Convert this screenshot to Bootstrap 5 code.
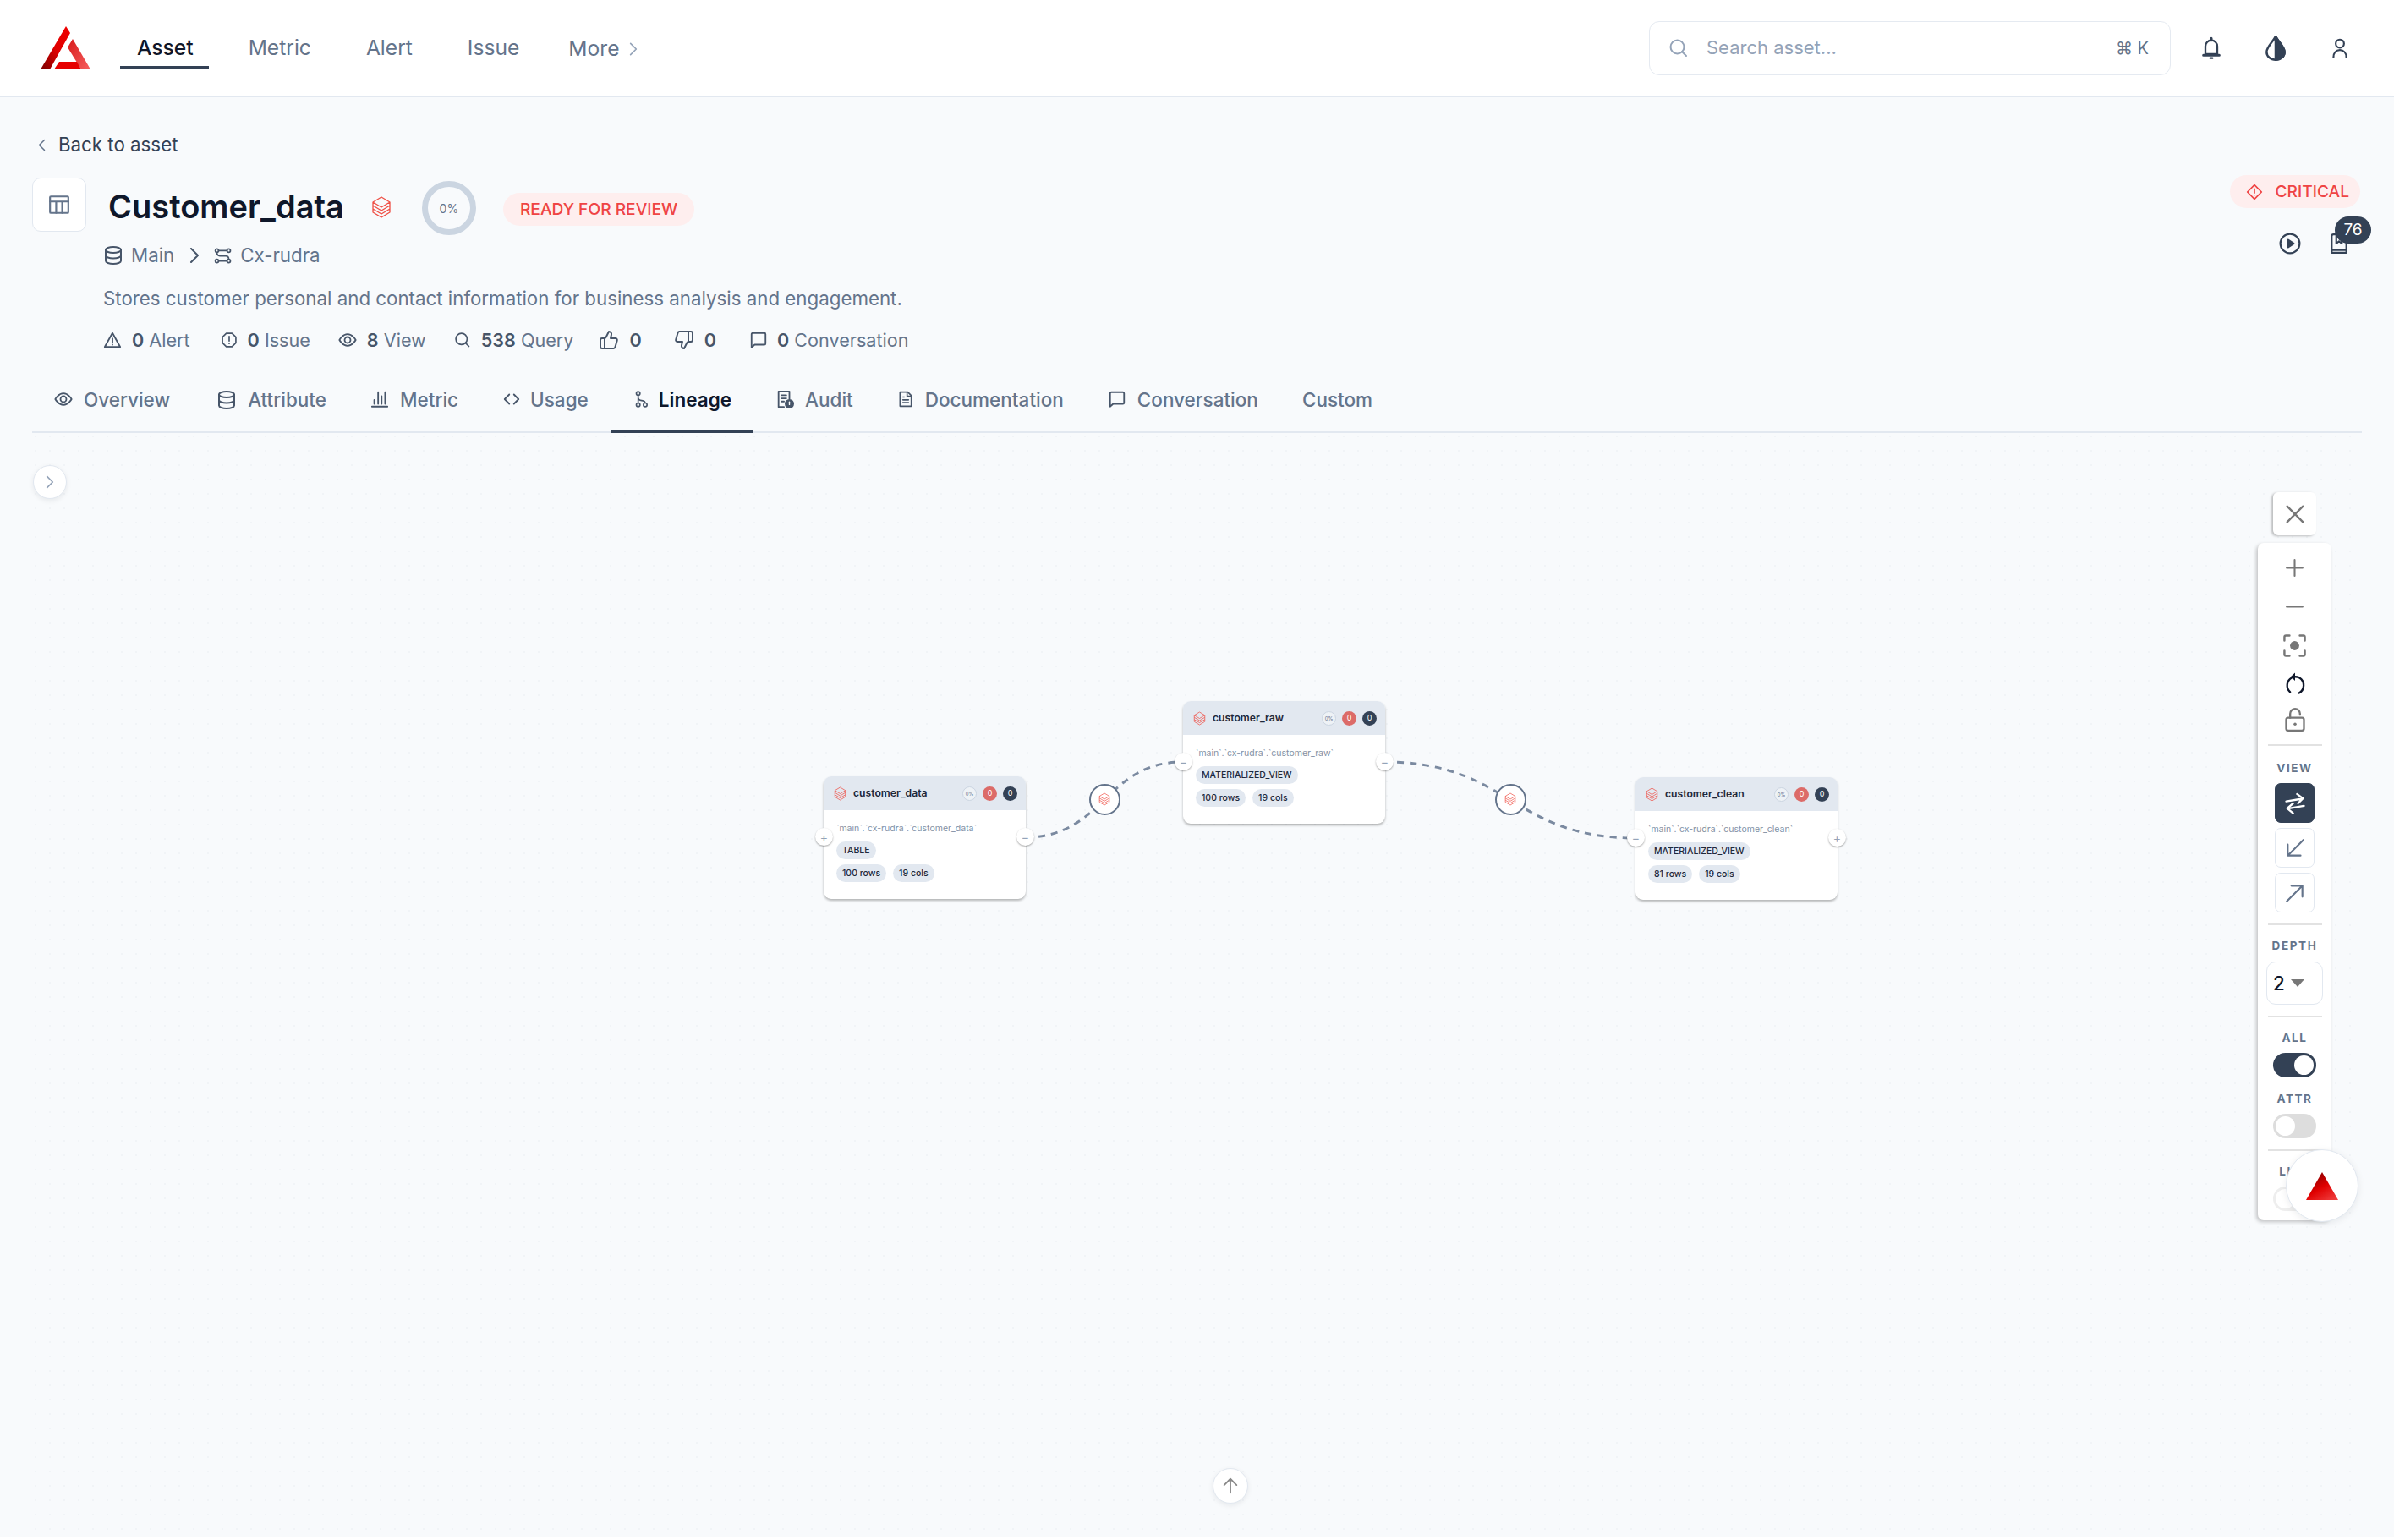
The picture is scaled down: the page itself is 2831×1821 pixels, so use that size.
<!DOCTYPE html>
<html lang="en">
<head>
    <meta charset="UTF-8">
    <meta name="viewport" content="width=device-width, initial-scale=1.0">
    <title>Customer_data - Lineage</title>
    <link href="https://cdn.jsdelivr.net/npm/bootstrap@5.3.0/dist/css/bootstrap.min.css" rel="stylesheet">
    <style>
        html { background: #fff; }
        body { width: 2831px; height: 1818px; overflow: hidden; background: #f8fafc; font-family: Inter, "Liberation Sans", sans-serif; color: #0f172a; font-size: 22.3px; }
        .ico { fill: none; stroke: currentColor; stroke-width: 2; stroke-linecap: round; stroke-linejoin: round; flex: none; }
        .dbx { fill: none; stroke: #ef4f45; stroke-width: 1.2; stroke-linejoin: round; flex: none; }

        /* top bar */
        .app-header { height: 115px; background: #fff; border-bottom: 2px solid #e2e8f0; padding: 0 43px 0 48px; }
        .main-nav { margin-left: 34px; gap: 25px; }
        .main-nav .nav-link { height: 50px; padding: 3px 20px 0; display: flex; align-items: center; color: #64748b; font-size: 24.6px; border-bottom: 4px solid transparent; }
        .main-nav .nav-link.active { margin-right: 2px; padding-right: 18px; color: #0f172a; font-weight: 500; border-bottom-color: #334155; }
        .main-nav .more { margin-left: -7px; padding-top: 6px; gap: 12px; }
        .main-nav .more svg { color: #94a3b8; }
        .search-box { width: 617px; height: 64px; margin-right: 27px; padding: 0 25px 0 22px; gap: 21px; border: 1.5px solid #e5eaf1; border-radius: 12px; color: #94a3b8; font-size: 22px; }
        .search-box kbd { background: none; padding: 0; box-shadow: none; color: #64748b; font-family: Inter, sans-serif; font-size: 20px; margin-left: auto; }
        .head-btn { width: 42px; height: 42px; padding: 0; border: 0; background: none; color: #334155; }
        .head-actions { gap: 34px; margin-top: -3px; }

        /* asset header */
        .page-head { padding: 0 38px; }
        .back-link { margin-top: 42px; height: 28px; padding-left: 7px; gap: 15px; color: #334155; }
        .back-link svg { color: #64748b; }
        .title-row { margin-top: 25px; height: 68px; }
        .type-box { width: 64px; height: 64px; margin-right: 26px; align-self: flex-start; color: #64748b; background: #fff; border: 1.5px solid #e2e8f0; border-radius: 10px; }
        .asset-title { margin: 0 32px 0 0; font-size: 38px; font-weight: 600; line-height: 1; color: #0f172a; }
        .title-dbx { margin-top: 2px; stroke-width: 1.300; }
        .score-ring { width: 64px; height: 64px; margin: 4px 32px 0 36px; border: 7px solid #cbd5e1; border-radius: 50%; font-size: 14px; color: #64748b; }
        .status-pill { height: 39px; margin-top: 6px; padding: 0 20px; background: #feeeee; color: #ef4444; border-radius: 20px; font-size: 19.2px; font-weight: 500; }
        .detail-block { margin-left: 84px; color: #64748b; }
        .crumbs { margin-top: 10px; height: 28px; }
        .crumbs svg { color: #475569; }
        .crumb-db { margin-right: 9px; }
        .crumb-sep { margin: 0 17px 0 18px; }
        .crumb-schema { margin-right: 10px; }
        .asset-desc { margin: 23px 0 0; line-height: 28px; }
        .stats { margin-top: 21px; height: 28px; font-size: 21.6px; color: #475569; }
        .stats svg { color: #475569; }
        .stats b { font-weight: 600; }
        .stat { gap: 12px; }
        .stat + .stat { margin-left: 33px; }
        .stat + .stat-issue { margin-left: 36px; }
        .stat + .stat-like { margin-left: 30px; }
        .stat + .stat-thumb { margin-left: 38px; }
        .stat + .stat-far { margin-left: 39px; gap: 11px; }
        .stat-label { color: #64748b; }
        .side-head { padding-top: 92px; }
        .critical-pill { height: 39px; margin-right: 2px; padding: 0 13px 0 19px; gap: 14px; background: #feeeee; color: #ef4444; border-radius: 20px; font-size: 19.2px; font-weight: 500; }
        .side-actions { margin: 29px 14px 0 0; gap: 32px; color: #334155; }
        .count-badge { left: 8px; top: -19px; width: 43px; height: 32px; background: #334155; color: #fff; border-radius: 16px; font-size: 19px; }

        /* tabs */
        .asset-tabs { margin: 18px 38px 0; border-bottom: 2px solid #e2e8f0; }
        .asset-tabs .nav-link { height: 78px; margin-bottom: -2px; padding: 25px 26px 0; gap: 13px; display: flex; align-items: flex-start; color: #64748b; font-size: 22.5px; font-weight: 500; line-height: 28px; border-bottom: 4px solid transparent; }
        .asset-tabs .nav-link.active { gap: 11px; color: #0f172a; font-weight: 600; border-bottom-color: #334155; }
        .asset-tabs .nav-link svg { color: #475569; margin-top: 2px; }
        .asset-tabs .tab-db { margin-left: 3px; }
        .asset-tabs .tab-code { gap: 11px; }

        /* lineage canvas */
        .canvas { height: 1304px; margin: 2px 38px 0; background-image: radial-gradient(circle, #dde1e6 .6px, transparent .9px); background-size: 17px 17px; background-position: -4.5px -6.5px; }
        .edges { left: 0; top: 0; width: 2755px; height: 1304px; }
        .round-btn { width: 40px; height: 40px; padding: 0; background: #fff; border: 1px solid #e2e8f0; border-radius: 50%; box-shadow: 0 2px 6px rgba(15, 23, 42, .08); }
        .expand-btn { left: 1px; top: 36px; color: #94a3b8; }
        .up-btn { left: 1396px; top: 1222px; width: 42px; height: 42px; color: #888; }

        .node { width: 239px; height: 145px; background: #fff; border-radius: 9px; box-shadow: 0 2px 3px rgba(0, 0, 0, .28); }
        .node-data { left: 936px; top: 404px; }
        .node-raw { left: 1361px; top: 315px; }
        .node-clean { left: 1896px; top: 405px; }
        .node-head { height: 40px; padding: 0 10px 0 12px; background: #e2e8f0; border-radius: 9px 9px 0 0; }
        .node-name { margin-left: 8px; margin-right: auto; font-size: 12.2px; font-weight: 600; color: #1e293b; }
        .node-head .dot { width: 17px; height: 17px; margin-left: 7px; border-radius: 50%; color: #fff; font-size: 9px; }
        .dot-score { background: #eef2f6; border: 1px solid #cbd5e1; color: #64748b !important; font-size: 6px !important; }
        .dot-red { background: #dc6b68; }
        .dot-dark { background: #334155; }
        .node-body { padding: 15px 15px 0; }
        .node-path { height: 14px; font-size: 10.5px; line-height: 14px; color: #8492a6; white-space: nowrap; }
        .node-tags { margin-top: 8px; }
        .node-tags + .node-tags { margin-top: 6px; gap: 8px; }
        .tag { height: 21px; padding: 0 7px; background: #e2e8f0; border-radius: 11px; font-size: 10.5px; font-weight: 500; line-height: 21px; color: #1e293b; }
        .handle { width: 21px; height: 21px; top: 61px; background: #fff; border-radius: 50%; box-shadow: 0 1px 2px rgba(0, 0, 0, .35); color: #94a3b8; font-size: 14px; line-height: 1; }
        .handle-l { left: -10px; }
        .handle-r { right: -10px; }
        .mid-node { width: 37px; height: 37px; top: 412.5px; background: #fff; border: 2.5px solid #64748b; border-radius: 50%; }
        .mid-a { left: 1249.5px; }
        .mid-b { left: 1729.5px; }

        /* tool panel */
        .tool-close { left: 2650px; top: 68px; width: 51px; height: 51px; padding: 0; background: #fff; border: 0; border-radius: 6px; box-shadow: -2px 1px 3px rgba(0, 0, 0, .25); color: #777; }
        .tool-panel { left: 2632px; top: 128px; width: 87px; height: 801px; padding-top: 6px; background: #fff; border-radius: 7px; box-shadow: -2px 2px 4px rgba(0, 0, 0, .22); }
        .tool-icon { width: 100%; height: 46px; padding: 0; border: 0; background: none; color: #777; }
        .tool-icon.reset { color: #0f172a; }
        .tool-icon.lock { height: 38px; }
        .tool-sep { width: 64px; height: 2px; margin: 10px 0 17px; background: #e2e2e2; flex: none; }
        .tool-sep.wide { margin: 13px 0 15px; }
        .tool-label { height: 18px; font-size: 13.5px; font-weight: 700; line-height: 18px; letter-spacing: 1.6px; color: #64748b; }
        .view-btn { width: 47px; height: 47px; margin-top: 6px; padding: 0; background: #fff; border: 1px solid #e2e8f0; border-radius: 7px; color: #64748b; }
        .view-btn.on { margin-top: 9px; background: #334155; border-color: #334155; color: #fff; }
        .depth-select { width: 67px; height: 51px; margin-top: 10px; padding-left: 7px; gap: 7px; border: 1px solid #e2e8f0; border-radius: 11px; font-weight: 500; }
        .depth-caret { width: 0; height: 0; border-left: 8px solid transparent; border-right: 8px solid transparent; border-top: 9px solid #777; }
        .toggle { width: 51px; height: 29px; margin-top: 9px; padding: 3px; background: #ddd; border-radius: 15px; flex: none; }
        .toggle i { display: block; width: 23px; height: 23px; background: #fff; border-radius: 50%; }
        .toggle.on { background: #334155; justify-content: flex-end; }
        .toggle.faint { background: #eee; margin-top: 9px; }
        .fab { left: 2665px; top: 845px; width: 86px; height: 86px; padding: 0; background: #fff; border: 1px solid #e2e8f0; border-radius: 50%; box-shadow: 0 2px 8px rgba(15, 23, 42, .08); }
    </style>
</head>
<body>
    <svg class="d-none" xmlns="http://www.w3.org/2000/svg">
        <symbol id="i-search" viewBox="0 0 24 24"><circle cx="10.5" cy="10.5" r="8"/><path d="M21 21l-5-5"/></symbol>
        <symbol id="i-bell" viewBox="0 0 24 24"><path d="M6 18V10a6 6 0 0 1 12 0v8z"/><path d="M12 4V2M4 19h16" stroke-width="2.600"/><path d="M11 22h2"/></symbol>
        <symbol id="i-contrast" viewBox="0 0 24 24"><path d="M12 1C8.500 7 3.500 11 3.500 15.500a8.500 7.500 0 0 0 17 0C20.500 11 15.500 7 12 1z"/><path d="M12 1c3.500 6 8.500 10 8.500 14.500a8.500 7.500 0 0 1-8.500 7.500z" fill="currentColor"/></symbol>
        <symbol id="i-user" viewBox="0 0 24 24"><circle cx="12" cy="7" r="4.500"/><path d="M5 22c0-5 3-8 7-8s7 3 7 8"/></symbol>
        <symbol id="i-table" viewBox="0 0 24 24"><rect x="2" y="3" width="20" height="18" rx="1"/><path d="M2 8.500h20M8.700 8.500V21M15.300 8.500V21"/></symbol>
        <symbol id="i-db" viewBox="0 0 24 24"><ellipse cx="12" cy="5.500" rx="9" ry="3.500"/><path d="M3 5.500v13c0 1.900 4 3.500 9 3.500s9-1.600 9-3.500v-13"/><path d="M3 12c0 1.900 4 3.500 9 3.500s9-1.600 9-3.500"/></symbol>
        <symbol id="i-schema" viewBox="0 0 24 24"><circle cx="4" cy="5" r="2.200"/><circle cx="20" cy="5" r="2.200"/><circle cx="4" cy="19" r="2.200"/><circle cx="20" cy="19" r="2.200"/><path d="M6.500 5h11M6.500 19h11M4 7.500c0 3 1.500 4.500 4 4.500h8c2.500 0 4 1.500 4 4.500"/></symbol>
        <symbol id="i-alert" viewBox="0 0 24 24"><path d="M12 3l10 18H2z"/><path d="M12 10v5M12 18v.01"/></symbol>
        <symbol id="i-issue" viewBox="0 0 24 24"><path d="M8 2.500h8l5.500 5.500v8L16 21.500H8L2.500 16V8z"/><path d="M12 7v6.500M12 17v.01"/></symbol>
        <symbol id="i-eye" viewBox="0 0 24 24"><path d="M1.500 12S5.500 4.500 12 4.500 22.500 12 22.500 12 18.500 19.500 12 19.500 1.500 12 1.500 12z"/><circle cx="12" cy="12" r="3.800"/></symbol>
        <symbol id="i-up" viewBox="0 0 24 24"><path d="M7 10v12M15 5.880 14 10h5.830a2 2 0 0 1 1.920 2.560l-2.330 8A2 2 0 0 1 17.500 22H4a2 2 0 0 1-2-2v-8a2 2 0 0 1 2-2h2.760a2 2 0 0 0 1.790-1.110L12 2a3.130 3.130 0 0 1 3 3.880Z"/></symbol>
        <symbol id="i-down" viewBox="0 0 24 24"><path d="M17 14V2M9 18.120 10 14H4.170a2 2 0 0 1-1.920-2.560l2.330-8A2 2 0 0 1 6.500 2H20a2 2 0 0 1 2 2v8a2 2 0 0 1-2 2h-2.760a2 2 0 0 0-1.790 1.110L12 22a3.130 3.130 0 0 1-3-3.880Z"/></symbol>
        <symbol id="i-chat" viewBox="0 0 24 24"><path d="M3 4.500A1.500 1.500 0 0 1 4.500 3h15A1.500 1.500 0 0 1 21 4.500v12a1.500 1.500 0 0 1-1.500 1.500H7l-4 3.500z"/></symbol>
        <symbol id="i-bars" viewBox="0 0 24 24"><path d="M2 21.500h20M5 18v-5M10 18V3M14.500 18V8M19 18V3"/></symbol>
        <symbol id="i-code" viewBox="0 0 24 24"><path d="M9 6l-6 6 6 6M15 6l6 6-6 6"/></symbol>
        <symbol id="i-lineage" viewBox="0 0 24 24"><circle cx="8" cy="4" r="2.600"/><circle cx="8" cy="20" r="2.600"/><circle cx="18" cy="20" r="2.600"/><path d="M8 6.600v10.800M8 9.500c0 3.500 2 4 5 4.500 3 .5 5 1 5 3.400"/></symbol>
        <symbol id="i-audit" viewBox="0 0 24 24"><path d="M11 22H4V2h14v10"/><path d="M8 7h6M8 11h6M8 15h3"/><circle cx="18" cy="18" r="5" fill="currentColor"/><path d="M18 15.500V19" stroke="#f8fafc" stroke-width="1.500"/></symbol>
        <symbol id="i-doc" viewBox="0 0 24 24"><path d="M4 2h11l5 5v15H4z"/><path d="M14 2v6h6M8 9h2M8 13h8M8 17h8"/></symbol>
        <symbol id="i-diamond" viewBox="0 0 24 24"><path d="M12 2l10 10-10 10L2 12z"/><path d="M12 7.500v6M12 16.500v.01"/></symbol>
        <symbol id="i-play" viewBox="0 0 24 24"><circle cx="12" cy="12" r="10.500"/><path d="M10 8l6 4-6 4z" fill="currentColor"/></symbol>
        <symbol id="i-book" viewBox="0 0 24 24"><path d="M4 22V4a2 2 0 0 1 2-2h12a2 2 0 0 1 2 2v18z"/><path d="M9 3v9l3-2.500 3 2.500V3"/><path d="M4 19h16"/></symbol>
        <symbol id="i-close" viewBox="0 0 24 24"><path d="M4 4l16 16M20 4L4 20"/></symbol>
        <symbol id="i-plus" viewBox="0 0 24 24"><path d="M12 3v18M3 12h18"/></symbol>
        <symbol id="i-minus" viewBox="0 0 24 24"><path d="M3 12h18"/></symbol>
        <symbol id="i-focus" viewBox="0 0 24 24"><path d="M2 7V3.500A1.500 1.500 0 0 1 3.500 2H7M17 2h3.500A1.500 1.500 0 0 1 22 3.500V7M22 17v3.500a1.500 1.500 0 0 1-1.500 1.500H17M7 22H3.500A1.500 1.500 0 0 1 2 20.500V17"/><circle cx="12" cy="12" r="4.500" fill="currentColor" stroke="none"/></symbol>
        <symbol id="i-reset" viewBox="0 0 24 24"><path d="M8.500 5.500A9 9 0 0 0 7 20M16 21a9 9 0 0 0 .5-15.500C15 4.800 14 4.500 12 4.500"/><path d="M12 .5v8L7.500 4.500z" fill="currentColor" stroke="none"/></symbol>
        <symbol id="i-lock" viewBox="0 0 24 24"><rect x="3" y="10" width="18" height="13" rx="2"/><path d="M7 10V6a5 5 0 0 1 10 0v1"/><circle cx="12" cy="16.500" r="1.500" fill="currentColor" stroke="none"/></symbol>
        <symbol id="i-swap" viewBox="0 0 24 24"><path d="M3 10l15-2.500M14 2.500l6 4.500-5 5"/><path d="M21 14.500L6 17M10 12l-6 5 6 5"/></symbol>
        <symbol id="i-in" viewBox="0 0 24 24"><path d="M21 3L4 20M4 8v12h14"/></symbol>
        <symbol id="i-out" viewBox="0 0 24 24"><path d="M3 21L20 4M8 4h12v12"/></symbol>
        <symbol id="i-arrow-up" viewBox="0 0 24 24"><path d="M12 21V3M4 11l8-8 8 8"/></symbol>
        <symbol id="i-dbx" viewBox="0 0 24 26"><path d="M12 1l10 6-10 6L2 7zM2 7v4l10 6 10-6V7M2 11v4l10 6 10-6v-4M2 15v4l10 6 10-6v-4"/></symbol>
    </svg>

    <nav class="app-header d-flex align-items-center">
        <svg width="60" height="52" viewBox="48 27 60 52" xmlns="http://www.w3.org/2000/svg" aria-label="Logo">
            <defs>
                <linearGradient id="logoA" x1="0" y1="1" x2="1" y2="0"><stop offset="0" stop-color="#7a0000"/><stop offset=".5" stop-color="#e00000"/><stop offset="1" stop-color="#f00000"/></linearGradient>
                <linearGradient id="logoB" x1="0" y1="0" x2="1" y2="1"><stop offset="0" stop-color="#d81a1a"/><stop offset="1" stop-color="#f66060"/></linearGradient>
            </defs>
            <polygon points="78,27 83,35 59,78 48,78" fill="url(#logoA)"/>
            <polygon points="86,42 107,78 96,78 80,52" fill="url(#logoB)"/>
            <polygon points="70,69 91,69 96,78 64,78" fill="#e60000"/>
        </svg>
        <div class="nav main-nav">
            <a class="nav-link active" href="#">Asset</a>
            <a class="nav-link" href="#">Metric</a>
            <a class="nav-link" href="#">Alert</a>
            <a class="nav-link" href="#">Issue</a>
            <a class="nav-link more" href="#">More <svg class="ico" width="10" height="16" viewBox="7 3 12 18"><path d="M9 4l8 8-8 8"/></svg></a>
        </div>
        <div class="ms-auto d-flex align-items-center">
            <div class="search-box d-flex align-items-center">
                <svg class="ico" width="24" height="24"><use href="#i-search"/></svg>
                <span>Search asset...</span>
                <kbd>⌘ K</kbd>
            </div>
            <div class="head-actions d-flex">
                <button class="head-btn" type="button"><svg class="ico" width="28" height="28"><use href="#i-bell"/></svg></button>
                <button class="head-btn" type="button"><svg class="ico" width="30" height="30"><use href="#i-contrast"/></svg></button>
                <button class="head-btn" type="button"><svg class="ico" width="26" height="26"><use href="#i-user"/></svg></button>
            </div>
        </div>
    </nav>

    <header class="page-head d-flex">
        <div>
            <div class="back-link d-flex align-items-center">
                <svg class="ico" width="9" height="15" viewBox="5 3 12 18"><path d="M15 4l-8 8 8 8"/></svg>
                <span>Back to asset</span>
            </div>
            <div class="title-row d-flex align-items-center">
                <div class="type-box d-flex align-items-center justify-content-center">
                    <svg class="ico" width="26" height="26"><use href="#i-table"/></svg>
                </div>
                <h1 class="asset-title">Customer_data</h1>
                <svg class="dbx title-dbx" width="24" height="26"><use href="#i-dbx"/></svg>
                <div class="score-ring d-flex align-items-center justify-content-center">0%</div>
                <span class="status-pill d-flex align-items-center">READY FOR REVIEW</span>
            </div>
            <div class="detail-block">
                <div class="crumbs d-flex align-items-center">
                    <svg class="ico crumb-db" width="24" height="24"><use href="#i-db"/></svg>
                    <span>Main</span>
                    <svg class="ico crumb-sep" width="12" height="18" viewBox="7 3 12 18"><path d="M9 4l8 8-8 8"/></svg>
                    <svg class="ico crumb-schema" width="21" height="21"><use href="#i-schema"/></svg>
                    <span>Cx-rudra</span>
                </div>
                <p class="asset-desc">Stores customer personal and contact information for business analysis and engagement.</p>
                <div class="stats d-flex align-items-center">
                    <div class="stat d-flex align-items-center"><svg class="ico" width="22" height="22"><use href="#i-alert"/></svg><span><b>0</b> <span class="stat-label">Alert</span></span></div>
                    <div class="stat stat-issue d-flex align-items-center"><svg class="ico" width="20" height="20"><use href="#i-issue"/></svg><span><b>0</b> <span class="stat-label">Issue</span></span></div>
                    <div class="stat d-flex align-items-center"><svg class="ico" width="22" height="22"><use href="#i-eye"/></svg><span><b>8</b> <span class="stat-label">View</span></span></div>
                    <div class="stat d-flex align-items-center"><svg class="ico" width="20" height="20"><use href="#i-search"/></svg><span><b>538</b> <span class="stat-label">Query</span></span></div>
                    <div class="stat stat-like d-flex align-items-center"><svg class="ico" width="24" height="24"><use href="#i-up"/></svg><b>0</b></div>
                    <div class="stat stat-thumb d-flex align-items-center"><svg class="ico" width="24" height="24"><use href="#i-down"/></svg><b>0</b></div>
                    <div class="stat stat-far d-flex align-items-center"><svg class="ico" width="22" height="22"><use href="#i-chat"/></svg><span><b>0</b> <span class="stat-label">Conversation</span></span></div>
                </div>
            </div>
        </div>
        <div class="side-head ms-auto d-flex flex-column align-items-end">
            <span class="critical-pill d-flex align-items-center"><svg class="ico" width="20" height="20"><use href="#i-diamond"/></svg>CRITICAL</span>
            <div class="side-actions d-flex">
                <svg class="ico" width="26" height="26"><use href="#i-play"/></svg>
                <div class="position-relative">
                    <svg class="ico d-block" width="26" height="26"><use href="#i-book"/></svg>
                    <span class="count-badge position-absolute d-flex align-items-center justify-content-center">76</span>
                </div>
            </div>
        </div>
    </header>

    <div class="nav asset-tabs">
        <a class="nav-link" href="#"><svg class="ico" width="22" height="22"><use href="#i-eye"/></svg>Overview</a>
        <a class="nav-link tab-db" href="#"><svg class="ico" width="24" height="24"><use href="#i-db"/></svg>Attribute</a>
        <a class="nav-link" href="#"><svg class="ico" width="22" height="22"><use href="#i-bars"/></svg>Metric</a>
        <a class="nav-link tab-code" href="#"><svg class="ico" width="22" height="22"><use href="#i-code"/></svg>Usage</a>
        <a class="nav-link active" href="#"><svg class="ico" width="20" height="22"><use href="#i-lineage"/></svg>Lineage</a>
        <a class="nav-link" href="#"><svg class="ico" width="22" height="22"><use href="#i-audit"/></svg>Audit</a>
        <a class="nav-link" href="#"><svg class="ico" width="20" height="22"><use href="#i-doc"/></svg>Documentation</a>
        <a class="nav-link" href="#"><svg class="ico" width="22" height="22"><use href="#i-chat"/></svg>Conversation</a>
        <a class="nav-link" href="#">Custom</a>
    </div>

    <main class="canvas position-relative">
        <svg class="edges position-absolute" viewBox="38 514 2755 1304" xmlns="http://www.w3.org/2000/svg">
            <g fill="none" stroke="#7b8aa0" stroke-width="3" stroke-dasharray="8 7">
                <path d="M1213 990C1306 990 1306 901 1399 901"/>
                <path d="M1637 901C1786 901 1786 991 1935 991"/>
            </g>
        </svg>

        <button class="round-btn expand-btn position-absolute d-flex align-items-center justify-content-center" type="button"><svg class="ico" width="10" height="16" viewBox="7 3 12 18"><path d="M9 4l8 8-8 8"/></svg></button>

        <div class="node node-data position-absolute">
            <div class="node-head d-flex align-items-center">
                <svg class="dbx" width="15" height="17"><use href="#i-dbx"/></svg>
                <span class="node-name">customer_data</span>
                <span class="dot dot-score d-flex align-items-center justify-content-center">0%</span>
                <span class="dot dot-red d-flex align-items-center justify-content-center">0</span>
                <span class="dot dot-dark d-flex align-items-center justify-content-center">0</span>
            </div>
            <div class="node-body">
                <div class="node-path">`main`.`cx-rudra`.`customer_data`</div>
                <div class="node-tags d-flex"><span class="tag">TABLE</span></div>
                <div class="node-tags d-flex"><span class="tag">100 rows</span><span class="tag">19 cols</span></div>
            </div>
            <span class="handle handle-l position-absolute d-flex align-items-center justify-content-center">+</span>
            <span class="handle handle-r position-absolute d-flex align-items-center justify-content-center">−</span>
        </div>

        <div class="node node-raw position-absolute">
            <div class="node-head d-flex align-items-center">
                <svg class="dbx" width="15" height="17"><use href="#i-dbx"/></svg>
                <span class="node-name">customer_raw</span>
                <span class="dot dot-score d-flex align-items-center justify-content-center">0%</span>
                <span class="dot dot-red d-flex align-items-center justify-content-center">0</span>
                <span class="dot dot-dark d-flex align-items-center justify-content-center">0</span>
            </div>
            <div class="node-body">
                <div class="node-path">`main`.`cx-rudra`.`customer_raw`</div>
                <div class="node-tags d-flex"><span class="tag">MATERIALIZED_VIEW</span></div>
                <div class="node-tags d-flex"><span class="tag">100 rows</span><span class="tag">19 cols</span></div>
            </div>
            <span class="handle handle-l position-absolute d-flex align-items-center justify-content-center">−</span>
            <span class="handle handle-r position-absolute d-flex align-items-center justify-content-center">−</span>
        </div>

        <div class="node node-clean position-absolute">
            <div class="node-head d-flex align-items-center">
                <svg class="dbx" width="15" height="17"><use href="#i-dbx"/></svg>
                <span class="node-name">customer_clean</span>
                <span class="dot dot-score d-flex align-items-center justify-content-center">0%</span>
                <span class="dot dot-red d-flex align-items-center justify-content-center">0</span>
                <span class="dot dot-dark d-flex align-items-center justify-content-center">0</span>
            </div>
            <div class="node-body">
                <div class="node-path">`main`.`cx-rudra`.`customer_clean`</div>
                <div class="node-tags d-flex"><span class="tag">MATERIALIZED_VIEW</span></div>
                <div class="node-tags d-flex"><span class="tag">81 rows</span><span class="tag">19 cols</span></div>
            </div>
            <span class="handle handle-l position-absolute d-flex align-items-center justify-content-center">−</span>
            <span class="handle handle-r position-absolute d-flex align-items-center justify-content-center">+</span>
        </div>

        <div class="mid-node mid-a position-absolute d-flex align-items-center justify-content-center"><svg class="dbx" width="14" height="16"><use href="#i-dbx"/></svg></div>
        <div class="mid-node mid-b position-absolute d-flex align-items-center justify-content-center"><svg class="dbx" width="14" height="16"><use href="#i-dbx"/></svg></div>

        <button class="tool-close position-absolute d-flex align-items-center justify-content-center" type="button"><svg class="ico" width="28" height="28"><use href="#i-close"/></svg></button>

        <aside class="tool-panel position-absolute d-flex flex-column align-items-center">
            <button class="tool-icon d-flex align-items-center justify-content-center" type="button"><svg class="ico" width="25" height="25"><use href="#i-plus"/></svg></button>
            <button class="tool-icon d-flex align-items-center justify-content-center" type="button"><svg class="ico" width="25" height="25"><use href="#i-minus"/></svg></button>
            <button class="tool-icon d-flex align-items-center justify-content-center" type="button"><svg class="ico" width="29" height="29"><use href="#i-focus"/></svg></button>
            <button class="tool-icon reset d-flex align-items-center justify-content-center" type="button"><svg class="ico" width="28" height="28"><use href="#i-reset"/></svg></button>
            <button class="tool-icon lock d-flex align-items-center justify-content-center" type="button"><svg class="ico" width="28" height="28"><use href="#i-lock"/></svg></button>
            <div class="tool-sep"></div>
            <div class="tool-label">VIEW</div>
            <button class="view-btn on d-flex align-items-center justify-content-center" type="button"><svg class="ico" width="28" height="28"><use href="#i-swap"/></svg></button>
            <button class="view-btn d-flex align-items-center justify-content-center" type="button"><svg class="ico" width="26" height="26"><use href="#i-in"/></svg></button>
            <button class="view-btn d-flex align-items-center justify-content-center" type="button"><svg class="ico" width="26" height="26"><use href="#i-out"/></svg></button>
            <div class="tool-sep wide"></div>
            <div class="tool-label">DEPTH</div>
            <div class="depth-select d-flex align-items-center"><span>2</span><span class="depth-caret"></span></div>
            <div class="tool-sep wide"></div>
            <div class="tool-label">ALL</div>
            <span class="toggle on d-flex"><i></i></span>
            <div class="tool-label mt-3">ATTR</div>
            <span class="toggle d-flex"><i></i></span>
            <div class="tool-sep wide"></div>
            <div class="tool-label">LINE</div>
            <span class="toggle faint d-flex"><i></i></span>
        </aside>

        <button class="fab position-absolute d-flex align-items-center justify-content-center" type="button">
            <svg width="38" height="33" viewBox="0 0 38 33" xmlns="http://www.w3.org/2000/svg">
                <defs><linearGradient id="fabTri" x1=".2" y1="0" x2=".9" y2="1"><stop offset="0" stop-color="#7a0000"/><stop offset=".5" stop-color="#e00000"/><stop offset="1" stop-color="#f04040"/></linearGradient></defs>
                <polygon points="19,0 38,33 0,33" fill="url(#fabTri)"/>
            </svg>
        </button>

        <button class="round-btn up-btn position-absolute d-flex align-items-center justify-content-center" type="button"><svg class="ico" width="22" height="22"><use href="#i-arrow-up"/></svg></button>
    </main>

    <script src="https://cdn.jsdelivr.net/npm/bootstrap@5.3.0/dist/js/bootstrap.bundle.min.js"></script>
</body>
</html>
